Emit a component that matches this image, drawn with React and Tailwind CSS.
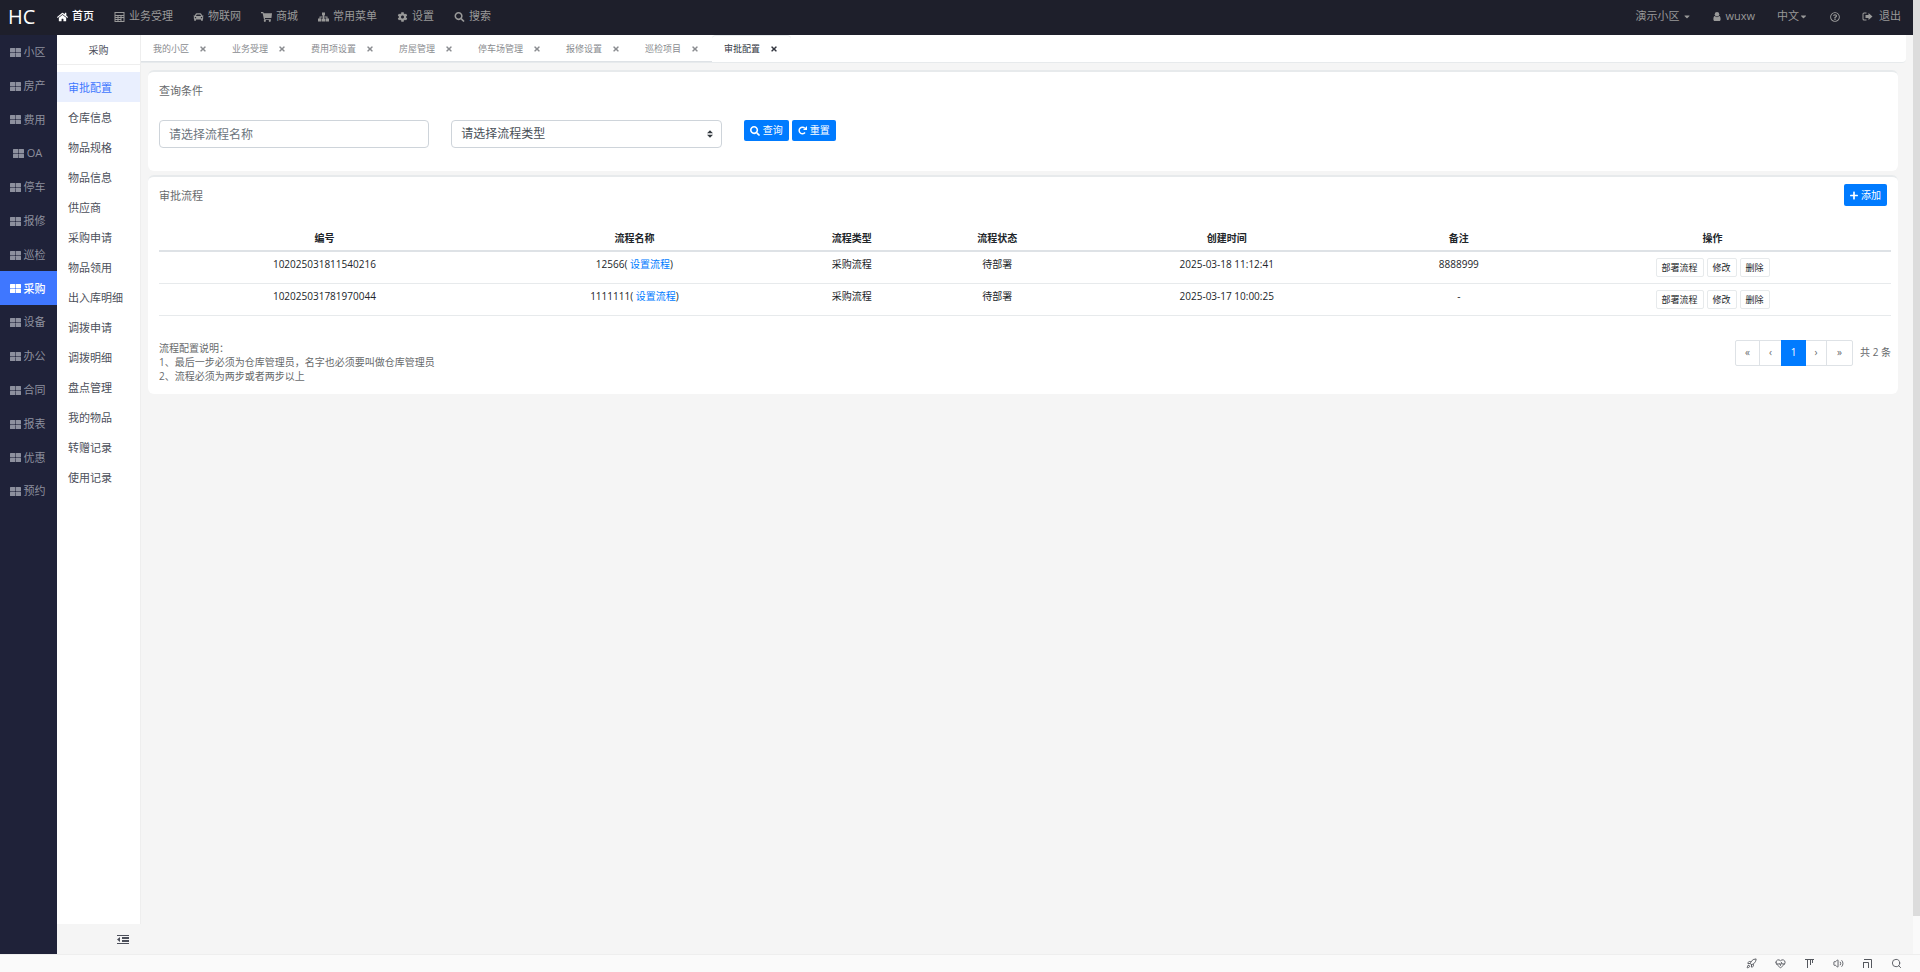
import { useState } from 'react';
import {
  FaHome,
  FaCar,
  FaCog,
  FaSearch,
  FaRegQuestionCircle,
  FaTimes,
  FaPlus,
  FaCaretDown
} from 'react-icons/fa';
import { Rocket, HeartPulse, Volume2, Search } from 'lucide-react';

function CalculatorIcon(props) {
  return (
    <svg viewBox="0 0 10 10" fill="currentColor" {...props}>
      <path fillRule="evenodd" d="M0 0h10v10H0zM1 1v2h8V1zM1 4v1h2V4zM4 4v1h2V4zM1 6v1h2V6zM4 6v1h2V6zM1 8v1h2V8zM4 8v1h2V8zM7 4v1h2V4zM7 6v3h2V6z" />
    </svg>
  );
}

function CartIcon(props) {
  return (
    <svg viewBox="0 0 20 18" fill="currentColor" {...props}>
      <path d="M0 0h4l1 2h15l-1 9H7l.4 1.500H18V14H5.500L3 2H0z" />
      <circle cx="7" cy="16" r="2" />
      <circle cx="16" cy="16" r="2" />
    </svg>
  );
}

function SitemapIcon(props) {
  return (
    <svg viewBox="0 0 22 18" fill="currentColor" {...props}>
      <path d="M8 0h6v6h-2v2h7v4h3v6h-7v-6h2v-2h-5v2h2v6H8v-6h2v-2H5v2h2v6H0v-6h3V8h7V6H8z" />
    </svg>
  );
}

function UserIcon(props) {
  return (
    <svg viewBox="0 0 16 20" fill="currentColor" {...props}>
      <circle cx="8" cy="5" r="5" />
      <path d="M3 9a7 7 0 0 0 10 0c2 .5 3 3 3 7 0 2-1 4-3 4H3c-2 0-3-2-3-4 0-4 1-6.500 3-7z" />
    </svg>
  );
}

function ThLargeIcon(props) {
  return (
    <svg viewBox="0 0 22 18" fill="currentColor" {...props}>
      <rect x="0" y="0" width="10.500" height="8.500" rx="1" />
      <rect x="11.500" y="0" width="10.500" height="8.500" rx="1" />
      <rect x="0" y="9.500" width="10.500" height="8.500" rx="1" />
      <rect x="11.500" y="9.500" width="10.500" height="8.500" rx="1" />
    </svg>
  );
}

function RepeatIcon(props) {
  return (
    <svg viewBox="0 0 18 18" {...props}>
      <path d="M14 13a6.500 6.500 0 1 1-.5-8.500" fill="none" stroke="currentColor" strokeWidth="3" />
      <path d="M18 0v8h-8z" fill="currentColor" />
    </svg>
  );
}

function SignOutIcon(props) {
  return (
    <svg viewBox="0 0 22 18" fill="currentColor" {...props}>
      <path d="M9 1H4a3 3 0 0 0-3 3v10a3 3 0 0 0 3 3h5v-2H4.500a1.500 1.500 0 0 1-1.500-1.500v-9A1.500 1.500 0 0 1 4.500 3H9z" />
      <path d="M13 2l8 7-8 7v-4H7V6h6z" />
    </svg>
  );
}

function OutdentIcon(props) {
  return (
    <svg viewBox="0 0 12 9" fill="currentColor" {...props}>
      <path d="M0 0h12v1H0zM5 2h7v2H5zM5 5h7v2H5zM0 8h12v1H0zM3 2v5L0 4.500z" />
    </svg>
  );
}

function AlignTopIcon(props) {
  return (
    <svg viewBox="0 0 11 11" fill="none" stroke="currentColor" {...props}>
      <path d="M1 1.500h9M3.500 2v8M6.500 2v5M8.500 2v3" />
    </svg>
  );
}

function WindowIcon(props) {
  return (
    <svg viewBox="0 0 11 11" fill="none" stroke="currentColor" {...props}>
      <path d="M2 1.500h7.500V10M1.500 4v6M1.500 4.500h5V10" />
    </svg>
  );
}

const NAV = [
  { name: '首页', icon: FaHome, active: true },
  { name: '业务受理', icon: CalculatorIcon },
  { name: '物联网', icon: FaCar },
  { name: '商城', icon: CartIcon },
  { name: '常用菜单', icon: SitemapIcon },
  { name: '设置', icon: FaCog },
  { name: '搜索', icon: FaSearch }
];

const CATALOGS = ['小区', '房产', '费用', 'OA', '停车', '报修', '巡检', '采购', '设备', '办公', '合同', '报表', '优惠', '预约'];

const MENUS = [
  '审批配置', '仓库信息', '物品规格', '物品信息', '供应商', '采购申请', '物品领用',
  '出入库明细', '调拨申请', '调拨明细', '盘点管理', '我的物品', '转赠记录', '使用记录'
];

const TABS = ['我的小区', '业务受理', '费用项设置', '房屋管理', '停车场管理', '报修设置', '巡检项目', '审批配置'];

const COLUMNS = [
  { title: '编号', width: 'w-[19.1%]' },
  { title: '流程名称', width: 'w-[16.7%]' },
  { title: '流程类型', width: 'w-[8.4%]' },
  { title: '流程状态', width: 'w-[8.4%]' },
  { title: '创建时间', width: 'w-[18.1%]' },
  { title: '备注', width: 'w-[8.7%]' },
  { title: '操作', width: 'w-[20.6%]' }
];

const FLOWS = [
  { id: '102025031811540216', name: '12566', type: '采购流程', state: '待部署', time: '2025-03-18 11:12:41', remark: '8888999' },
  { id: '102025031781970044', name: '1111111', type: '采购流程', state: '待部署', time: '2025-03-17 10:00:25', remark: '-' }
];

const STATUS_ICONS = [
  { label: '加速', icon: Rocket },
  { label: '健康', icon: HeartPulse },
  { label: '置顶', icon: AlignTopIcon },
  { label: '声音', icon: Volume2 },
  { label: '窗口', icon: WindowIcon },
  { label: '缩放', icon: Search }
];

function Header() {
  return (
    <header className="flex h-[35px] items-center justify-between bg-[#1e1f2b] pr-3 pb-[2px] text-[11px] text-[#999]">
      <nav className="flex items-center">
        <a href="#home" className="w-[47px] pl-2 text-[20px] leading-[32px] text-white">HC</a>
        {NAV.map(({ name, icon: Icon, active }) => (
          <a
            key={name}
            href="#nav"
            className={`flex items-center gap-1 px-[10px] ${active ? 'font-medium text-white' : ''}`}
          >
            <Icon className="h-[10px] w-[11px]" />
            {name}
          </a>
        ))}
      </nav>
      <div className="flex items-center gap-[22px]">
        <button className="flex items-center gap-1">
          演示小区 <FaCaretDown className="h-[9px] w-[8px]" />
        </button>
        <a href="#user" className="flex items-center gap-1">
          <UserIcon className="h-[9px] w-[8px]" />
          wuxw
        </a>
        <button className="flex items-center">
          中文 <FaCaretDown className="h-[9px] w-[9px]" />
        </button>
        <button aria-label="帮助">
          <FaRegQuestionCircle className="h-[10px] w-[10px]" />
        </button>
        <a href="#logout" className="flex items-center gap-[6px]">
          <SignOutIcon className="h-[9px] w-[11px]" />
          退出
        </a>
      </div>
    </header>
  );
}

function CatalogBar({ current, onSelect }) {
  return (
    <nav className="w-[57px] shrink-0 bg-[#1f2239]">
      <div className="grid h-[473px] auto-rows-fr">
        {CATALOGS.map((name) => (
          <button
            key={name}
            onClick={() => onSelect(name)}
            className={`flex items-center justify-center gap-[3px] pt-px pr-[2px] text-[11px] ${
              name === current ? 'bg-[#3f77ff] font-medium text-white' : 'text-[#8d909e]'
            }`}
          >
            <ThLargeIcon className="h-[9px] w-[11px]" />
            {name}
          </button>
        ))}
      </div>
    </nav>
  );
}

function MenuBar({ title, current, onSelect }) {
  return (
    <aside className="flex w-[84px] shrink-0 flex-col text-[11px] text-[#4c4f5a]">
      <div className="flex-1 border-r border-[#eee] bg-white">
        <h2 className="h-[30px] border-b border-[#eee] text-center text-[10px] leading-[30px]">{title}</h2>
        <ul className="pt-[7px]">
          {MENUS.map((name) => (
            <li key={name}>
              <button
                onClick={() => onSelect(name)}
                className={`h-[30px] w-full pt-px pl-[11px] text-left leading-[30px] ${
                  name === current ? 'bg-[#e9effe] text-[#3f77ff]' : ''
                }`}
              >
                {name}
              </button>
            </li>
          ))}
        </ul>
      </div>
      <div className="flex h-[30px] items-center justify-end pr-3">
        <button aria-label="收起菜单">
          <OutdentIcon className="h-[9px] w-[12px]" />
        </button>
      </div>
    </aside>
  );
}

function TabBar({ current, onSelect }) {
  return (
    <div className="flex h-7 rounded-br border-b border-[#e7eaec] bg-white text-[9px]">
      {TABS.map((name) => (
        <div
          key={name}
          className={`flex items-center gap-[11px] border-t pr-[14px] pl-3 ${
            name === current
              ? 'rounded-t border-[#e7eaec] text-[#33363f]'
              : 'border-b border-t-transparent border-b-[#dee2e6] text-[#8a8c90]'
          }`}
        >
          <button onClick={() => onSelect(name)}>{name}</button>
          <button aria-label={`关闭${name}`}>
            <FaTimes className="h-[8px] w-[6px]" />
          </button>
        </div>
      ))}
    </div>
  );
}

function SearchCard() {
  return (
    <section className="rounded-md border-t-2 border-[#e7eaec] bg-white pr-[7px] pb-[23px] pl-[11px]">
      <h3 className="pt-[11px] text-[11px] leading-4">查询条件</h3>
      <div className="mt-[21px] grid grid-cols-6 gap-[22px]">
        <input
          type="text"
          aria-label="流程名称"
          placeholder="请选择流程名称"
          className="h-[28px] w-full rounded-sm border border-[#ced4da] px-[9px] text-[12px] text-[#495057] placeholder:text-[#6c757d]"
        />
        <div className="relative">
          <select
            aria-label="流程类型"
            className="h-[28px] w-full appearance-none rounded-sm border border-[#ced4da] bg-white px-[9px] text-[12px] text-[#495057]"
          >
            <option>请选择流程类型</option>
          </select>
          <svg viewBox="0 0 4 5" className="pointer-events-none absolute top-[10px] right-[9px] h-[8px] w-[6px]">
            <path fill="#343a40" d="M2 0L0 2h4zm0 5L0 3h4z" />
          </svg>
        </div>
        <div className="flex items-start gap-[3px] text-[10px] text-white">
          <button className="flex h-[21px] items-center gap-[3px] rounded-[2px] bg-[#007bff] px-[6px]">
            <FaSearch className="h-[10px] w-[10px]" />
            查询
          </button>
          <button className="flex h-[21px] items-center gap-[3px] rounded-[2px] bg-[#007bff] px-[6px]">
            <RepeatIcon className="h-[9px] w-[9px]" />
            重置
          </button>
        </div>
      </div>
    </section>
  );
}

function FlowTable() {
  return (
    <table className="w-full table-fixed text-center text-[10px] leading-[15px] text-[#212529]">
      <thead>
        <tr className="border-b-2 border-[#dee2e6]">
          {COLUMNS.map((col) => (
            <th key={col.title} className={`${col.width} pt-2 pb-1 font-bold`}>{col.title}</th>
          ))}
        </tr>
      </thead>
      <tbody>
        {FLOWS.map((flow) => (
          <tr key={flow.id} className="h-8 border-b border-[#e7eaec] align-top">
            <td className="pt-[5px]">{flow.id}</td>
            <td className="pt-[5px]">
              {flow.name}( <a href="#flow" className="text-[#007bff]">设置流程</a>)
            </td>
            <td className="pt-[5px]">{flow.type}</td>
            <td className="pt-[5px]">{flow.state}</td>
            <td className="pt-[5px]">{flow.time}</td>
            <td className="pt-[5px]">{flow.remark}</td>
            <td className="pt-[6px]">
              <div className="flex justify-center gap-[3px] text-[9px]">
                {['部署流程', '修改', '删除'].map((action) => (
                  <button key={action} className="h-[19px] rounded-[2px] border border-[#e7eaec] px-[5px]">
                    {action}
                  </button>
                ))}
              </div>
            </td>
          </tr>
        ))}
      </tbody>
    </table>
  );
}

function Pagination() {
  return (
    <div className="flex items-start gap-[7px] text-[10px]">
      <div className="flex h-[26px] rounded-[2px] border border-[#dee2e6]">
        <button className="w-6 border-r border-[#dee2e6]">«</button>
        <button className="w-[21px]">‹</button>
        <button className="-my-px w-[25px] bg-[#007bff] font-medium text-white">1</button>
        <button className="w-[21px] border-r border-[#dee2e6]">›</button>
        <button className="w-[25px]">»</button>
      </div>
      <span className="leading-6">共 2 条</span>
    </div>
  );
}

function FlowCard() {
  return (
    <section className="mt-1 rounded-md border-t-2 border-[#e7eaec] bg-white pr-[7px] pb-[11px] pl-[11px]">
      <div className="flex items-start justify-between pt-[7px] pr-1">
        <h3 className="pt-1 text-[11px] leading-4">审批流程</h3>
        <button className="flex h-[22px] items-center gap-[3px] rounded-[2px] bg-[#007bff] px-[6px] text-[10px] text-white">
          <FaPlus className="h-[9px] w-[8px]" />
          添加
        </button>
      </div>
      <div className="pt-[17px]">
        <FlowTable />
      </div>
      <div className="flex justify-between pt-6">
        <p className="pt-px text-[10px] leading-[14px]">
          流程配置说明：<br />
          1、最后一步必须为仓库管理员，名字也必须要叫做仓库管理员<br />
          2、流程必须为两步或者两步以上
        </p>
        <Pagination />
      </div>
    </section>
  );
}

export default function App() {
  const [catalog, setCatalog] = useState('采购');
  const [menu, setMenu] = useState('审批配置');
  const [tab, setTab] = useState('审批配置');

  return (
    <div className="flex h-screen flex-col bg-[#f5f5f5] font-['Open_Sans','Noto_Sans_CJK_SC',sans-serif] text-[#676a6c]">
      <div className="flex min-h-0 flex-1">
        <div className="flex min-w-0 flex-1 flex-col">
          <Header />
          <div className="flex min-h-0 flex-1">
            <CatalogBar current={catalog} onSelect={setCatalog} />
            <MenuBar title={catalog} current={menu} onSelect={setMenu} />
            <main className="min-w-0 flex-1 pr-[7px]">
              <TabBar current={tab} onSelect={setTab} />
              <div className="pt-[7px] pr-2 pl-[7px]">
                <SearchCard />
                <FlowCard />
              </div>
            </main>
          </div>
        </div>
        <div className="w-[7px] bg-[#fafafa]">
          <div className="h-[96%] bg-[#dcdcdc]" />
        </div>
      </div>
      <footer className="flex h-[18px] items-center justify-end gap-[18px] border-t border-[#eee] bg-[#fafafa] pr-[18px]">
        {STATUS_ICONS.map(({ label, icon: Icon }) => (
          <button key={label} aria-label={label}>
            <Icon className="h-[11px] w-[11px] text-[#55585e]" />
          </button>
        ))}
      </footer>
    </div>
  );
}
